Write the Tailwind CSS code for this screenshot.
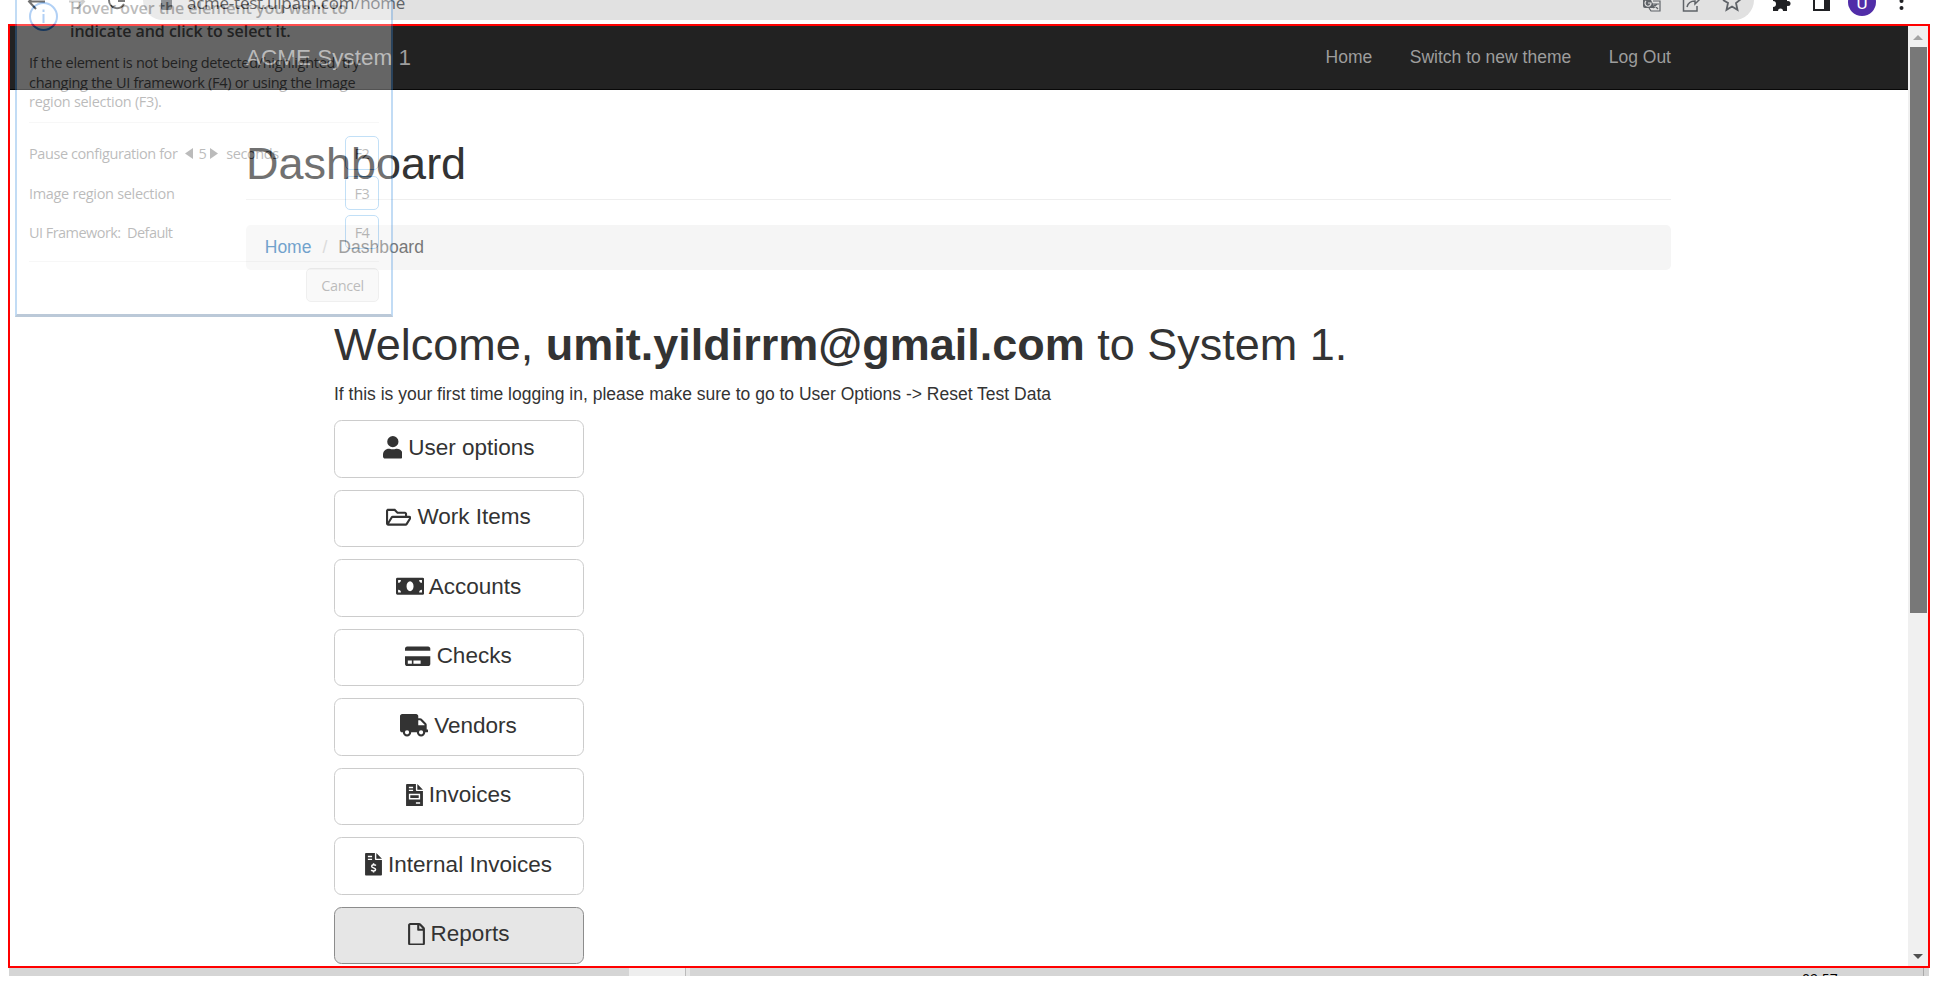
<!DOCTYPE html>
<html lang="en">
<head>
<meta charset="utf-8">
<title>ACME System 1 - Dashboard</title>
<script src="https://cdn.jsdelivr.net/npm/@tailwindcss/browser@4"></script>
</head>
<body class="relative flex h-[992px] w-[1938px] flex-col overflow-hidden bg-white font-['Liberation_Sans',sans-serif] text-[17.5px] leading-[25px] text-[#333]">

<!-- browser toolbar -->
<header class="flex h-6 shrink-0 items-start overflow-hidden">
  <svg class="h-6 w-[143px] shrink-0" viewBox="0 0 143 24" fill="none" stroke="#5f6368" stroke-width="2">
    <path d="M29 1.500H45M36 -6L29 1.500L36 9" stroke="#333"/>
    <path d="M69 1.500H83M77 -6L84 1.500L77 9" stroke="#b8b8b8"/>
    <path d="M109 0A8 8 0 0 0 124 4M118 1H125" stroke="#444"/>
  </svg>
  <div class="flex h-5 w-[1611px] items-start rounded-b-[20px] bg-[#e1e1e1]">
    <svg class="ml-[18px] h-3 w-3 shrink-0" viewBox="0 0 12 12" fill="#5f6368"><path d="M0 0H11V8Q11 10 9 10H2Q0 10 0 8Z"/></svg>
    <div class="-mt-[9px] ml-[14px] font-['Open_Sans',sans-serif] text-[17px] leading-6 tracking-[-0.25px] text-[#222]">acme-test.uipath.com<span class="text-[#5f6368]">/home</span></div>
    <svg class="ml-auto h-5 w-[120px] shrink-0" viewBox="1634 0 120 20" fill="none" stroke="#5f6368" stroke-width="1.800">
      <path d="M1643 0H1651L1655 8H1645Q1643 8 1643 6Z" fill="#5f6368" stroke="none"/><path d="M1646 1A3 3 0 1 0 1651 3H1648" stroke="#e1e1e1" stroke-width="1.200"/><path d="M1653 1H1660V11H1651L1649 8M1652 4H1659M1657 4L1653 8M1654 5L1658 9" stroke-width="1.200"/>
      <path d="M1683.500 0V11H1697V6M1687 7C1688 3 1691 1 1695 1V4L1700 -1" stroke-width="1.500"/>
      <path d="M1723 0L1728 3L1726.500 9.800L1732 6.500L1737.500 9.800L1736 3L1741 -1"/>
    </svg>
  </div>
  <svg class="h-6 w-[184px] shrink-0" viewBox="1754 0 184 24">
    <path d="M1773 -4H1787V1A3 3 0 0 1 1787 6V11H1783A2.500 2.500 0 0 0 1778 11H1773V7A3 3 0 0 0 1773 1Z" fill="#202124"/><circle cx="1788" cy="3.500" r="2.500" fill="#202124"/>
    <path d="M1814 -4H1829V10H1814Z" fill="none" stroke="#202124" stroke-width="2"/><path d="M1824 -4H1830V11H1824Z" fill="#202124"/>
    <circle cx="1862" cy="2" r="14" fill="#512da8"/>
    <text x="1862" y="8.500" text-anchor="middle" font-family="Roboto, sans-serif" font-size="17" fill="#fff">U</text>
    <g fill="#202124"><circle cx="1901.500" cy="1" r="2"/><circle cx="1901.500" cy="8" r="2"/></g>
  </svg>
</header>

<!-- selected page region -->
<section class="ml-2 flex h-[944px] w-[1922px] shrink-0 border-2 border-[#f00] bg-white">
  <div class="flex w-[1898px] flex-col">
    <nav class="flex h-16 shrink-0 justify-between border-b border-[#080808] bg-[#222] pr-[237px] pl-[236px] text-[#9d9d9d]">
      <div class="pt-[19px] text-[22.5px]">ACME System 1</div>
      <div class="flex gap-[37.5px] pt-[18.5px]"><span>Home</span><span>Switch to new theme</span><span>Log Out</span></div>
    </nav>
    <main class="ml-[236px] flex w-[1425px] flex-col">
      <h1 class="mt-[49px] h-[61px] border-b border-[#eee] text-[45px] leading-[49.5px]">Dashboard</h1>
      <div class="mt-[25px] flex h-[45px] items-center rounded-[5px] bg-[#f5f5f5] px-[18.75px]">
        <span class="text-[#337ab7]">Home</span><span class="px-[11px] text-[#ccc]">/</span><span class="text-[#777]">Dashboard</span>
      </div>
      <div class="ml-[88px] pt-[50px]">
        <h1 class="text-[45px] leading-[49.5px]">Welcome, <b>umit.yildirrm@gmail.com</b> to System 1.</h1>
        <p class="mt-[12.5px]">If this is your first time logging in, please make sure to go to User Options -&gt; Reset Test Data</p>
        <div class="mt-[13px] flex w-[250px] flex-col gap-3 text-[22.5px]">
          <div class="flex h-[57.5px] items-center justify-center gap-[6px] rounded-[7.5px] border border-[#ccc] pr-px pb-[3px]">
            <svg class="h-[22.500px] w-[19.700px]" viewBox="0 0 448 512" fill="#333"><path d="M224 256A128 128 0 1 0 224 0A128 128 0 0 0 224 256ZM314 288H297C252 309 196 309 151 288H134C60 288 0 348 0 422V464C0 490 22 512 48 512H400C426 512 448 490 448 464V422C448 348 388 288 314 288Z"/></svg>User options</div>
          <div class="flex h-[57.5px] items-center justify-center gap-[6px] rounded-[7.5px] border border-[#ccc] pr-px pb-[3px]">
            <svg class="h-[22.500px] w-[25.300px]" viewBox="0 0 576 512" fill="#333"><path d="M528 224H480V176C480 150 458 128 432 128H272L208 64H48C22 64 0 86 0 112V400C0 426 22 448 48 448H448C465 448 481 439 489 425L569 297C589 265 565 224 528 224ZM48 118C48 114 50 112 54 112H188L252 176H426C430 176 432 178 432 182V224H152C135 224 119 233 111 247L48 351ZM448 400H72L150 272H528Z"/></svg>Work Items</div>
          <div class="flex h-[57.5px] items-center justify-center gap-[5px] rounded-[7.5px] border border-[#ccc] pr-px pb-[3px]">
            <svg class="h-[22.500px] w-[28.100px]" viewBox="0 0 640 512" fill="#333" fill-rule="evenodd"><path d="M32 64H608A32 32 0 0 1 640 96V416A32 32 0 0 1 608 448H32A32 32 0 0 1 0 416V96A32 32 0 0 1 32 64ZM48 112V176A64 64 0 0 0 112 112ZM48 400H112A64 64 0 0 0 48 336ZM320 144C276 144 240 194 240 256S276 368 320 368S400 318 400 256S364 144 320 144ZM592 400V336A64 64 0 0 0 528 400ZM592 176V112H528A64 64 0 0 0 592 176Z"/></svg>Accounts</div>
          <div class="flex h-[57.5px] items-center justify-center gap-[6px] rounded-[7.5px] border border-[#ccc] pr-px pb-[3px]">
            <svg class="h-[22.500px] w-[25.300px]" viewBox="0 0 576 512" fill="#333" fill-rule="evenodd"><path d="M0 128V80C0 54 22 32 48 32H528C554 32 576 54 576 80V128ZM0 256H576V432C576 458 554 480 528 480H48C22 480 0 458 0 432ZM64 352V424H156V352ZM192 352V424H356V352Z"/></svg>Checks</div>
          <div class="flex h-[57.5px] items-center justify-center gap-[6px] rounded-[7.5px] border border-[#ccc] pr-px pb-[3px]">
            <svg class="h-[22.500px] w-[28.100px]" viewBox="0 0 640 512" fill="#333" fill-rule="evenodd"><path d="M624 352H608V244C608 231 603 219 594 210L494 110C485 101 473 96 460 96H416V48C416 22 394 0 368 0H48C22 0 0 22 0 48V368C0 394 22 416 48 416H64A96 96 0 0 0 256 416H384A96 96 0 0 0 576 416H624C633 416 640 409 640 400V368C640 359 633 352 624 352ZM160 464A48 48 0 1 1 160 368A48 48 0 0 1 160 464ZM480 464A48 48 0 1 1 480 368A48 48 0 0 1 480 464ZM560 256H416V144H460L560 244Z"/></svg>Vendors</div>
          <div class="flex h-[57.5px] items-center justify-center gap-[6px] rounded-[7.5px] border border-[#ccc] pr-px pb-[3px]">
            <svg class="h-[22.500px] w-[17px]" viewBox="0 0 384 512" fill="#333" fill-rule="evenodd"><path d="M256 0V128H384ZM224 0H24C11 0 0 11 0 24V488C0 501 11 512 24 512H360C373 512 384 501 384 488V160H248C235 160 224 149 224 136ZM64 64H160V96H64ZM64 128H160V160H64ZM320 416V448H224V416ZM64 224H320V352H64ZM96 256V320H288V256Z"/></svg>Invoices</div>
          <div class="flex h-[57.5px] items-center justify-center gap-[6px] rounded-[7.5px] border border-[#ccc] pr-px pb-[3px]">
            <svg class="h-[22.500px] w-[17px]" viewBox="0 0 384 512" fill="#333" fill-rule="evenodd"><path d="M256 0V128H384ZM224 0H24C11 0 0 11 0 24V488C0 501 11 512 24 512H360C373 512 384 501 384 488V160H248C235 160 224 149 224 136ZM64 64H160V96H64ZM64 128H160V160H64Z"/><path d="M248 285C225 264 158 258 150 298C144 346 242 330 240 380C234 420 166 412 138 389M194 232V272M194 408V444" fill="none" stroke="#fff" stroke-width="34"/></svg>Internal Invoices</div>
          <div class="flex h-[57.5px] items-center justify-center gap-[6px] rounded-[7.5px] border border-[#8c8c8c] bg-[#e6e6e6] pr-px pb-[3px]">
            <svg class="h-[22.500px] w-[17px]" viewBox="0 0 384 512" fill="#333" fill-rule="evenodd"><path d="M370 98L286 14C277 5 265 0 252 0H48C22 0 0 22 0 48V464C0 490 22 512 48 512H336C362 512 384 490 384 464V132C384 119 379 107 370 98ZM332 128H256V52ZM48 464V48H208V152C208 165 219 176 232 176H336V464Z"/></svg>Reports</div>
        </div>
      </div>
    </main>
  </div>
  <!-- page scrollbar -->
  <div class="flex w-5 flex-col items-center bg-[#f0f0f0]">
    <svg class="mt-[9px] h-[5px] w-[10px]" viewBox="0 0 10 5" fill="#a3a3a3"><path d="M5 0L10 5H0Z"/></svg>
    <div class="mt-[7px] h-[566px] w-[17px] bg-[#787878]"></div>
    <svg class="mt-auto mb-[7px] h-[5px] w-[10px]" viewBox="0 0 10 5" fill="#505050"><path d="M0 0H10L5 5Z"/></svg>
  </div>
</section>

<!-- taskbar -->
<footer class="ml-[9px] flex h-2 w-[1920px] shrink-0 overflow-hidden bg-[#d5d5d5]">
  <div class="ml-[620px] w-14 bg-[#eee]"></div><div class="w-px bg-[#bbb]"></div><div class="w-1 bg-[#e5e5e5]"></div>
  <div class="ml-[1112px] font-['Open_Sans',sans-serif] text-[14px] leading-[21px] text-black">09:57</div>
  <div class="mr-[5px] ml-auto w-px bg-[#aaa]"></div>
</footer>

<!-- translucent picker panel -->
<aside class="absolute -top-5 left-[15px] flex h-[337px] w-[378px] flex-col border-2 border-b-[3px] border-[#3a8ee0] border-b-[#205080] bg-white px-3 font-['Open_Sans',sans-serif] text-[14.5px] leading-5 text-[#222] opacity-30">
  <div class="mt-[14px] flex gap-3">
    <svg class="mt-[6px] h-[29px] w-[29px] shrink-0" viewBox="0 0 29 29" fill="none" stroke="#0067df" stroke-width="2"><circle cx="14.500" cy="14.500" r="13.500"/><path d="M14.500 12V21M14.500 7.500V10"/></svg>
    <div class="pt-px text-[16px] leading-[23px] font-semibold tracking-[-0.05px] whitespace-nowrap"><div>Hover over the element you want to</div><div>indicate and click to select it.</div></div>
  </div>
  <div class="mt-[10px] leading-[19.500px] tracking-[-0.3px] whitespace-nowrap"><div>If the element is not being detected/highlighted, try</div><div>changing the UI framework (F4) or using the Image</div><div>region selection (F3).</div></div>
  <div class="mt-[10px] h-px shrink-0 bg-[#e5e5e5]"></div>
  <div class="mt-[13px] flex h-[34px] items-center justify-between tracking-[-0.42px]">
    <div class="flex items-center pt-0.5 whitespace-pre">Pause configuration for<svg class="mx-[5px] ml-2 h-[11px] w-2" viewBox="0 0 8 11"><path d="M8 0V11L0 5.500Z" fill="#222"/></svg>5<svg class="mr-2 ml-1 h-[11px] w-2" viewBox="0 0 8 11"><path d="M0 0V11L8 5.500Z" fill="#222"/></svg>seconds</div>
    <div class="flex h-[34px] w-[34px] items-center justify-center rounded-[5px] border border-[#3a9ae8] pt-0.5">F2</div>
  </div>
  <div class="mt-[6px] flex h-[34px] items-center justify-between tracking-[-0.32px]"><span class="pt-0.5">Image region selection</span><div class="flex h-[34px] w-[34px] items-center justify-center rounded-[5px] border border-[#3a9ae8] pt-0.5">F3</div></div>
  <div class="mt-[5px] flex h-[34px] items-center justify-between tracking-[-0.55px]"><span class="pt-0.5 whitespace-pre">UI Framework:  Default</span><div class="flex h-[34px] w-[34px] items-center justify-center rounded-[5px] border border-[#3a9ae8] pt-0.5">F4</div></div>
  <div class="mt-[12px] h-px shrink-0 bg-[#e5e5e5]"></div>
  <div class="mt-[6px] flex h-[34px] w-[73px] items-center justify-center self-end rounded-[5px] border border-[#ccc] bg-[#eee] pt-0.5 tracking-[-0.4px]">Cancel</div>
</aside>
</body>
</html>
